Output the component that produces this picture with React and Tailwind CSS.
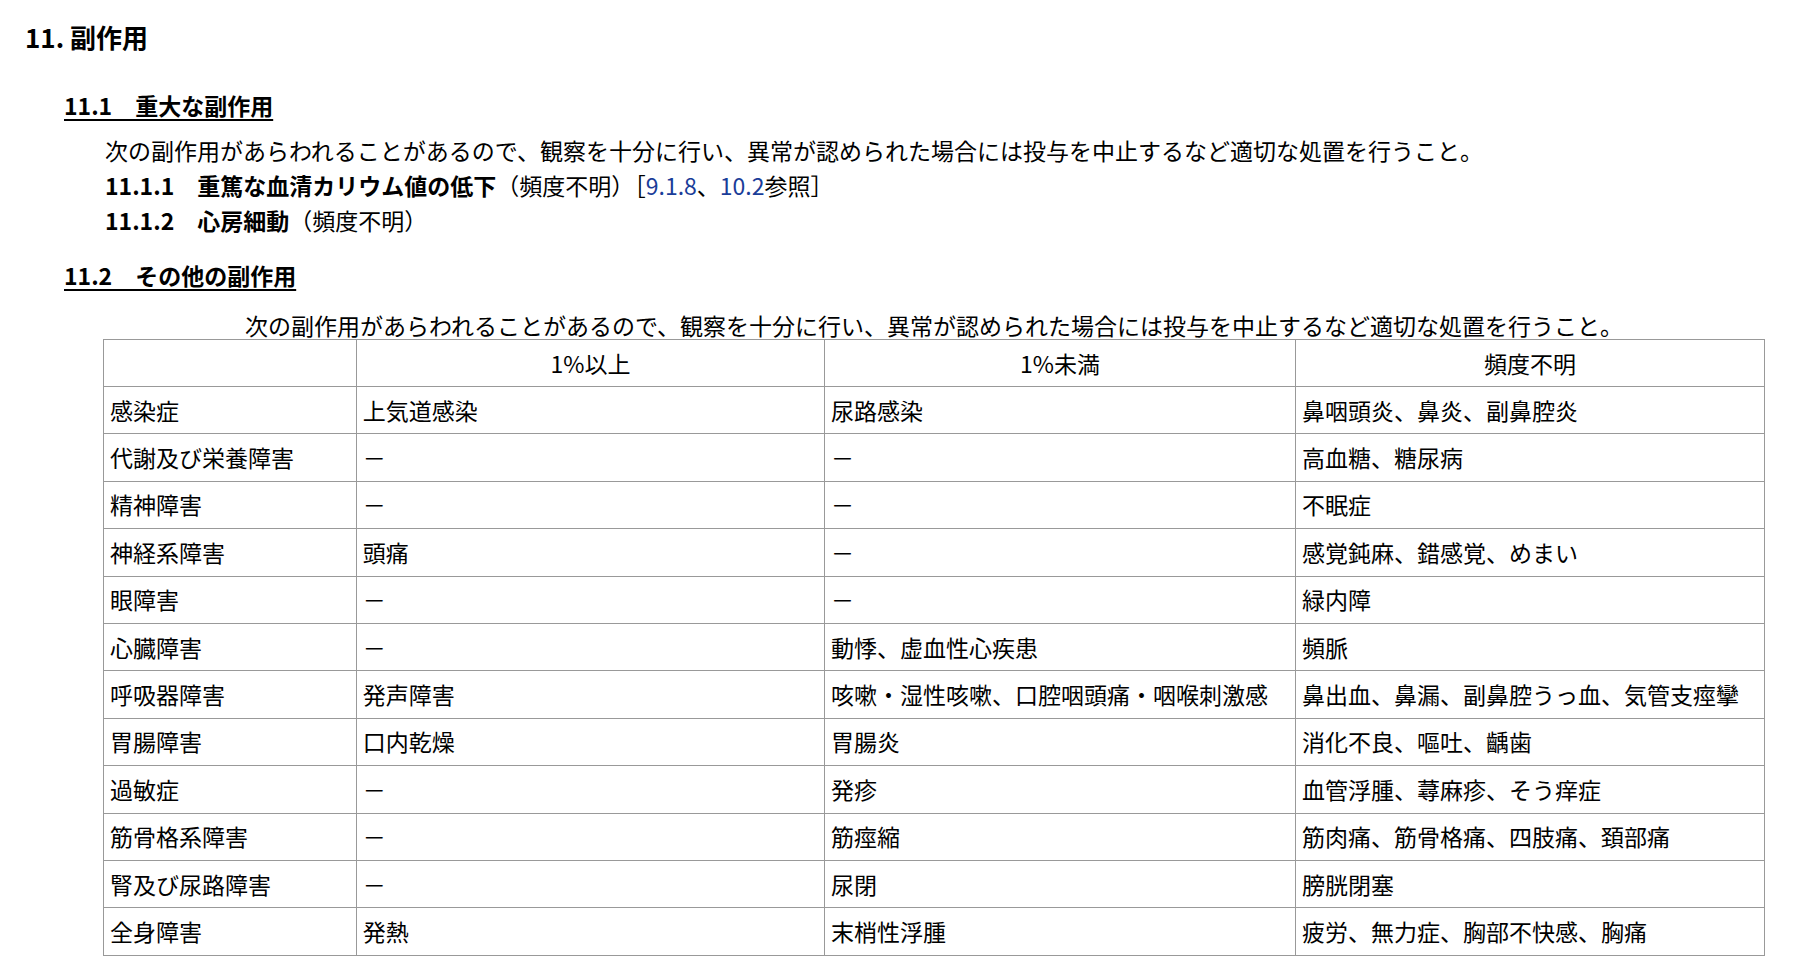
const rows = [
  ['感染症', '上気道感染', '尿路感染', '鼻咽頭炎、鼻炎、副鼻腔炎'],
  ['代謝及び栄養障害', '－', '－', '高血糖、糖尿病'],
  ['精神障害', '－', '－', '不眠症'],
  ['神経系障害', '頭痛', '－', '感覚鈍麻、錯感覚、めまい'],
  ['眼障害', '－', '－', '緑内障'],
  ['心臓障害', '－', '動悸、虚血性心疾患', '頻脈'],
  ['呼吸器障害', '発声障害', '咳嗽・湿性咳嗽、口腔咽頭痛・咽喉刺激感', '鼻出血、鼻漏、副鼻腔うっ血、気管支痙攣'],
  ['胃腸障害', '口内乾燥', '胃腸炎', '消化不良、嘔吐、齲歯'],
  ['過敏症', '－', '発疹', '血管浮腫、蕁麻疹、そう痒症'],
  ['筋骨格系障害', '－', '筋痙縮', '筋肉痛、筋骨格痛、四肢痛、頚部痛'],
  ['腎及び尿路障害', '－', '尿閉', '膀胱閉塞'],
  ['全身障害', '発熱', '末梢性浮腫', '疲労、無力症、胸部不快感、胸痛'],
]

const msg = '次の副作用があらわれることがあるので、観察を十分に行い、異常が認められた場合には投与を中止するなど適切な処置を行うこと。'

export default function App() {
  return (
    <div className="bg-white text-black text-[23px] leading-[35px] pl-[25px] pt-[18px]" style={{ fontFamily: '"Noto Sans CJK JP", sans-serif' }}>
      <h1 className="text-[26px] font-bold leading-[38px]">11. 副作用</h1>

      <h2 className="mt-[32px] ml-[39px] text-[23px] font-bold underline underline-offset-4 leading-[35px]">11.1　重大な副作用</h2>
      <div className="ml-[80px] mt-[10px]">
        <p>{msg}</p>
        <p><b>11.1.1　重篤な血清カリウム値の低下</b>（頻度不明）［<span className="text-[#1a3d99]">9.1.8</span>、<span className="text-[#1a3d99]">10.2</span>参照］</p>
        <p><b>11.1.2　心房細動</b>（頻度不明）</p>
      </div>

      <h2 className="mt-[20px] ml-[39px] text-[23px] font-bold underline underline-offset-4 leading-[35px]">11.2　その他の副作用</h2>

      <div className="ml-[78px] w-[1662px] mt-[18px]">
        <p className="text-center leading-[28px]">{msg}</p>
        <table className="w-full border-collapse border border-[#999] text-[23px]">
          <colgroup>
            <col className="w-[253px]" />
            <col className="w-[469px]" />
            <col className="w-[471px]" />
            <col className="w-[469px]" />
          </colgroup>
          <thead>
            <tr className="h-[47px]">
              <th className="border border-[#999] font-normal"></th>
              <th className="border border-[#999] font-normal">1%以上</th>
              <th className="border border-[#999] font-normal">1%未満</th>
              <th className="border border-[#999] font-normal">頻度不明</th>
            </tr>
          </thead>
          <tbody>
            {rows.map((r) => (
              <tr key={r[0]} className="h-[47.4px]">
                {r.map((c, i) => (
                  <td key={i} className="border border-[#999] px-[6px] whitespace-nowrap">{c}</td>
                ))}
              </tr>
            ))}
          </tbody>
        </table>
      </div>
    </div>
  )
}
